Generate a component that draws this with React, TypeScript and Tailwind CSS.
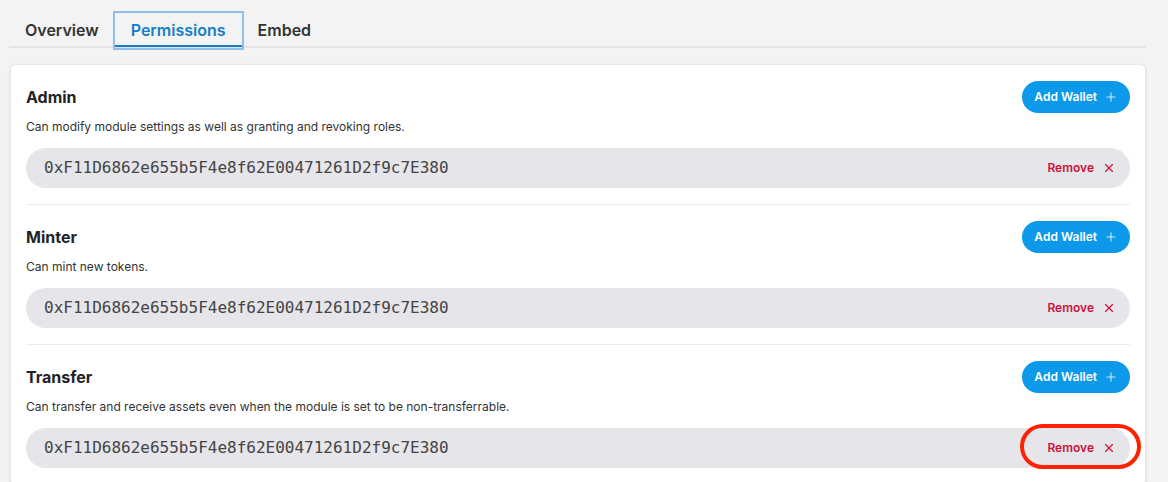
import { Plus, X } from 'lucide-react';

type Role = { name: string; description: string; wallets: string[] };

const roles: Role[] = [
    { name: 'Admin', description: 'Can modify module settings as well as granting and revoking roles.', wallets: ['0xF11D6862e655b5F4e8f62E00471261D2f9c7E380'] },
    { name: 'Minter', description: 'Can mint new tokens.', wallets: ['0xF11D6862e655b5F4e8f62E00471261D2f9c7E380'] },
    { name: 'Transfer', description: 'Can transfer and receive assets even when the module is set to be non-transferrable.', wallets: ['0xF11D6862e655b5F4e8f62E00471261D2f9c7E380'] },
];

const tabs = ['Overview', 'Permissions', 'Embed'];

const RoleSection = ({ role, highlight }: { role: Role; highlight: boolean }) => (
    <section className="border-b border-[#ebebeb] pt-4 pb-4">
        <div className="flex h-8 items-center justify-between">
            <h2 className="text-base font-bold text-[#1f2328]">{role.name}</h2>
            <button className="flex h-8 items-center gap-[7px] rounded-full bg-[#0c99ea] pl-3 pr-3 text-xs font-semibold text-white">
                Add Wallet
                <Plus className="h-3.5 w-3.5 text-white/75" strokeWidth={2} />
            </button>
        </div>
        <p className="mt-1.5 text-xs leading-4 text-[#333]">{role.description}</p>
        {role.wallets.map((w) => (
            <div key={w} className="mt-[13px] flex h-10 items-center justify-between rounded-full bg-[#e5e5ea] pl-[18px] pr-[14px]">
                <span className="font-['DejaVu_Sans_Mono',monospace] text-base text-[#444]">{w}</span>
                <div className="relative">
                    <button className="flex items-center gap-2 text-xs font-semibold text-[#d0103a]">
                        Remove
                        <X className="h-3.5 w-3.5" strokeWidth={2} />
                    </button>
                    {highlight && (
                        <div className="pointer-events-none absolute -top-[16px] -left-[27px] h-[45px] w-[121px] rounded-full border-4 border-[#ff2200]" />
                    )}
                </div>
            </div>
        ))}
    </section>
);

export default function App() {
    return (
        <div className="min-h-screen w-full bg-[#f3f3f3] px-2.5 pt-[13px] font-['Inter',sans-serif]">
            <nav className="-ml-px mr-3 flex border-b-2 border-[#e3e3e8]">
                {tabs.map((t) => {
                    const active = t === 'Permissions';
                    return (
                        <div
                            key={t}
                            className={
                                active
                                    ? 'relative -mb-[2px] flex h-[35px] items-center px-4 pb-[2px] text-base font-semibold text-[#157ec6] ring-2 ring-[#8fbfe8]'
                                    : 'flex h-[33px] items-center px-4 text-base font-semibold text-[#333]'
                            }
                        >
                            {t}
                            {active && <span className="absolute inset-x-0 bottom-px h-[2px] bg-[#157ec6]" />}
                        </div>
                    );
                })}
            </nav>
            <div className="mt-4 mr-3 rounded-md border border-[#e6e6e6] bg-white px-[15px] shadow-sm">
                {roles.map((r, i) => (
                    <RoleSection key={r.name} role={r} highlight={i === roles.length - 1} />
                ))}
            </div>
        </div>
    );
}
